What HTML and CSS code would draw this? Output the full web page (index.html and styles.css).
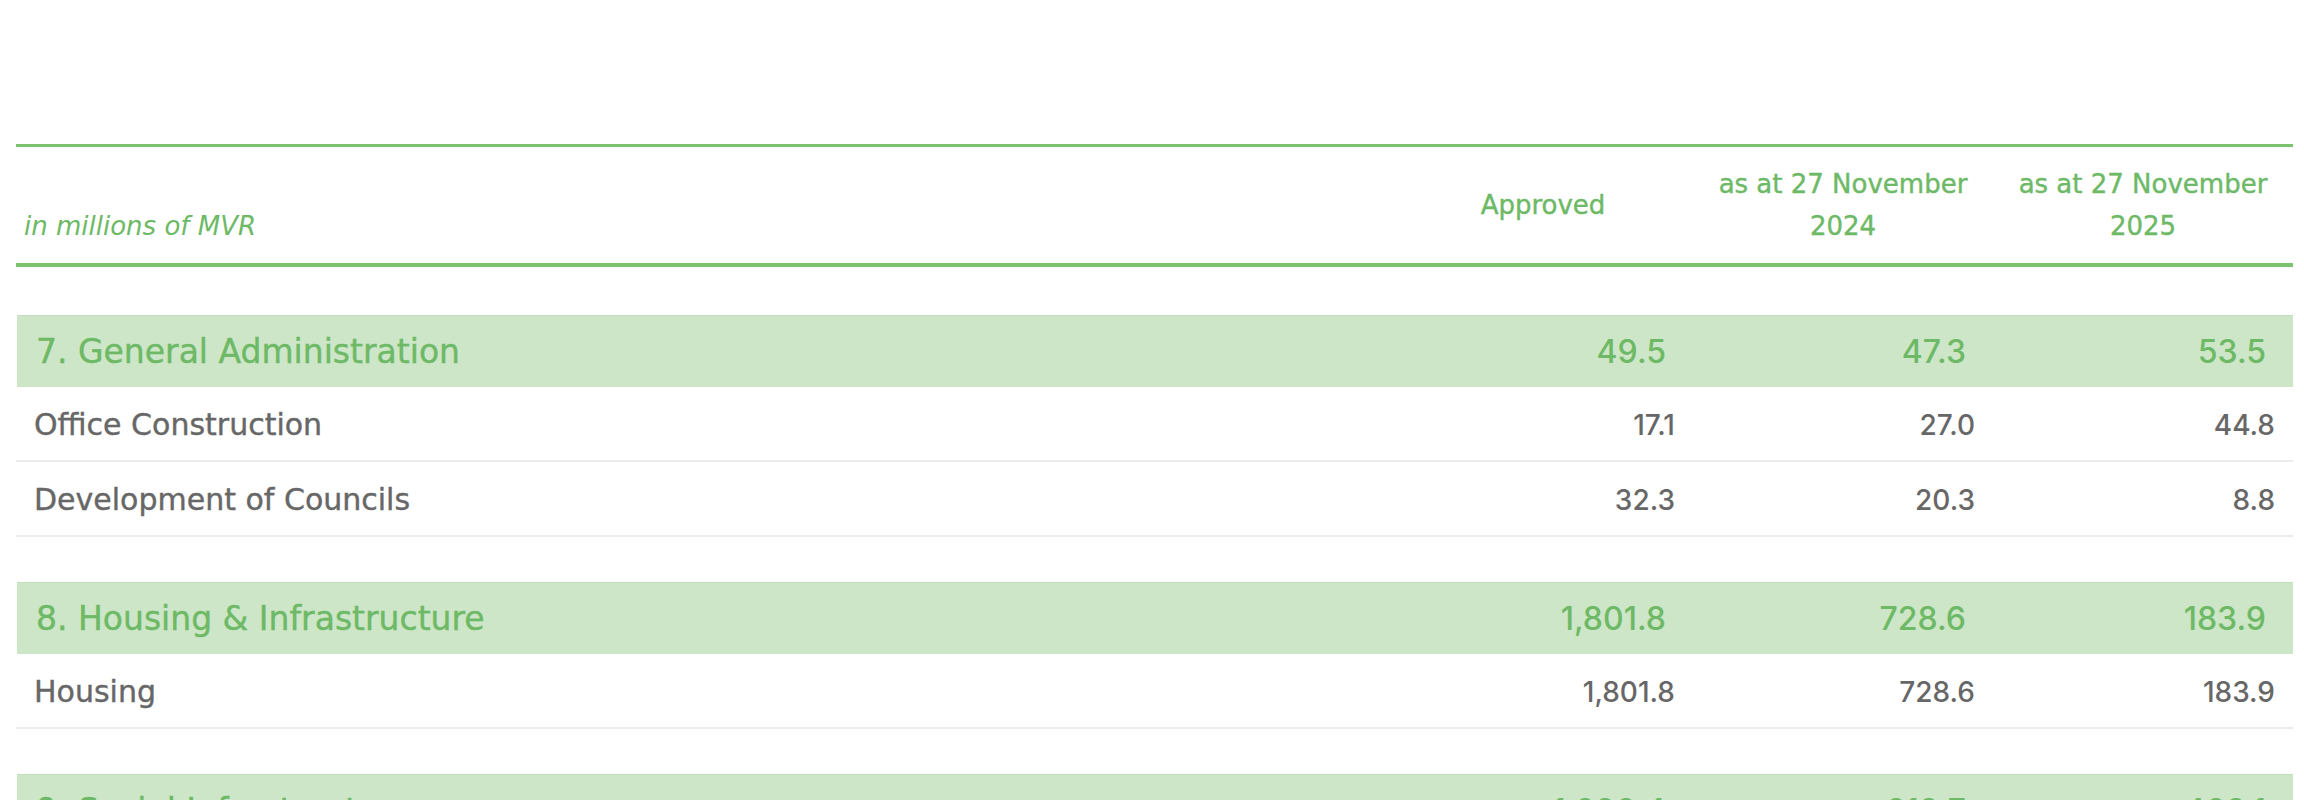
FILE: index.html
```html
<!DOCTYPE html>
<html lang="en">
<head>
<meta charset="utf-8">
<title>Development expenditure</title>
<link rel="stylesheet" href="styles.css">
</head>
<body>
<div class="sheet">
  <div class="table">
    <div class="head">
      <div class="unit">in millions of MVR</div>
      <div class="hcell">Approved</div>
      <div class="hcell">as at 27 November<br>2024</div>
      <div class="hcell">as at 27 November<br>2025</div>
    </div>

    <div class="group">
      <div class="row section">
        <div class="label">7. General Administration</div>
        <div class="num">49.5</div>
        <div class="num">47.3</div>
        <div class="num">53.5</div>
      </div>
      <div class="row item">
        <div class="label">Office Construction</div>
        <div class="num">17.1</div>
        <div class="num">27.0</div>
        <div class="num">44.8</div>
      </div>
      <div class="row item">
        <div class="label">Development of Councils</div>
        <div class="num">32.3</div>
        <div class="num">20.3</div>
        <div class="num">8.8</div>
      </div>
    </div>

    <div class="group">
      <div class="row section">
        <div class="label">8. Housing &amp; Infrastructure</div>
        <div class="num">1,801.8</div>
        <div class="num">728.6</div>
        <div class="num">183.9</div>
      </div>
      <div class="row item">
        <div class="label">Housing</div>
        <div class="num">1,801.8</div>
        <div class="num">728.6</div>
        <div class="num">183.9</div>
      </div>
    </div>

    <div class="group">
      <div class="row section">
        <div class="label">9. Social Infrastructure</div>
        <div class="num">1,090.4</div>
        <div class="num">612.7</div>
        <div class="num">402.1</div>
      </div>
    </div>
  </div>
</div>
</body>
</html>
```

FILE: styles.css
```css
html, body {
  margin: 0;
  padding: 0;
  background: #ffffff;
}

body {
  font-family: "DejaVu Sans", "Noto Sans", sans-serif;
  color: #676767;
}

.sheet {
  padding: 144px 11px 0 16px;
}

.table {
  border-top: 3px solid #7cc370;
}

.head {
  display: grid;
  grid-template-columns: 1fr 300px 300px 300px;
  border-bottom: 4px solid #7cc370;
  color: #6db966;
  height: 116px;
}

.unit {
  align-self: end;
  padding: 0 0 16px 8px;
  font-size: 26px;
  line-height: 42px;
  font-weight: 300;
  font-style: italic;
}

.hcell {
  align-self: center;
  text-align: center;
  font-size: 26px;
  line-height: 42px;
  font-weight: 400;
  -webkit-text-stroke: 0.4px currentColor;
}

.group {
  margin-top: 45px;
}

.head + .group {
  margin-top: 48px;
}

.row {
  display: grid;
  grid-template-columns: 1fr 300px 300px 300px;
  align-items: center;
}

.label {
  -webkit-text-stroke: 0.4px currentColor;
}

.num {
  font-family: "Inter", "DejaVu Sans", sans-serif;
  font-weight: 500;
  text-align: right;
}

.section {
  height: 72px;
  box-sizing: border-box;
  background: #cde6c8;
  border-top: 1px solid #c3dfbd;
  color: #6db966;
  font-size: 33px;
  margin-left: 1px;
}

.section .label {
  padding-left: 19px;
}

.section .num {
  font-size: 32px;
  padding-right: 27px;
}

.item {
  height: 75px;
  box-sizing: border-box;
  border-bottom: 2px solid #ececec;
  font-size: 30px;
  padding-top: 2px;
}

.item .label {
  padding-left: 18px;
}

.item .num {
  font-size: 28px;
  padding-right: 18px;
}
```
